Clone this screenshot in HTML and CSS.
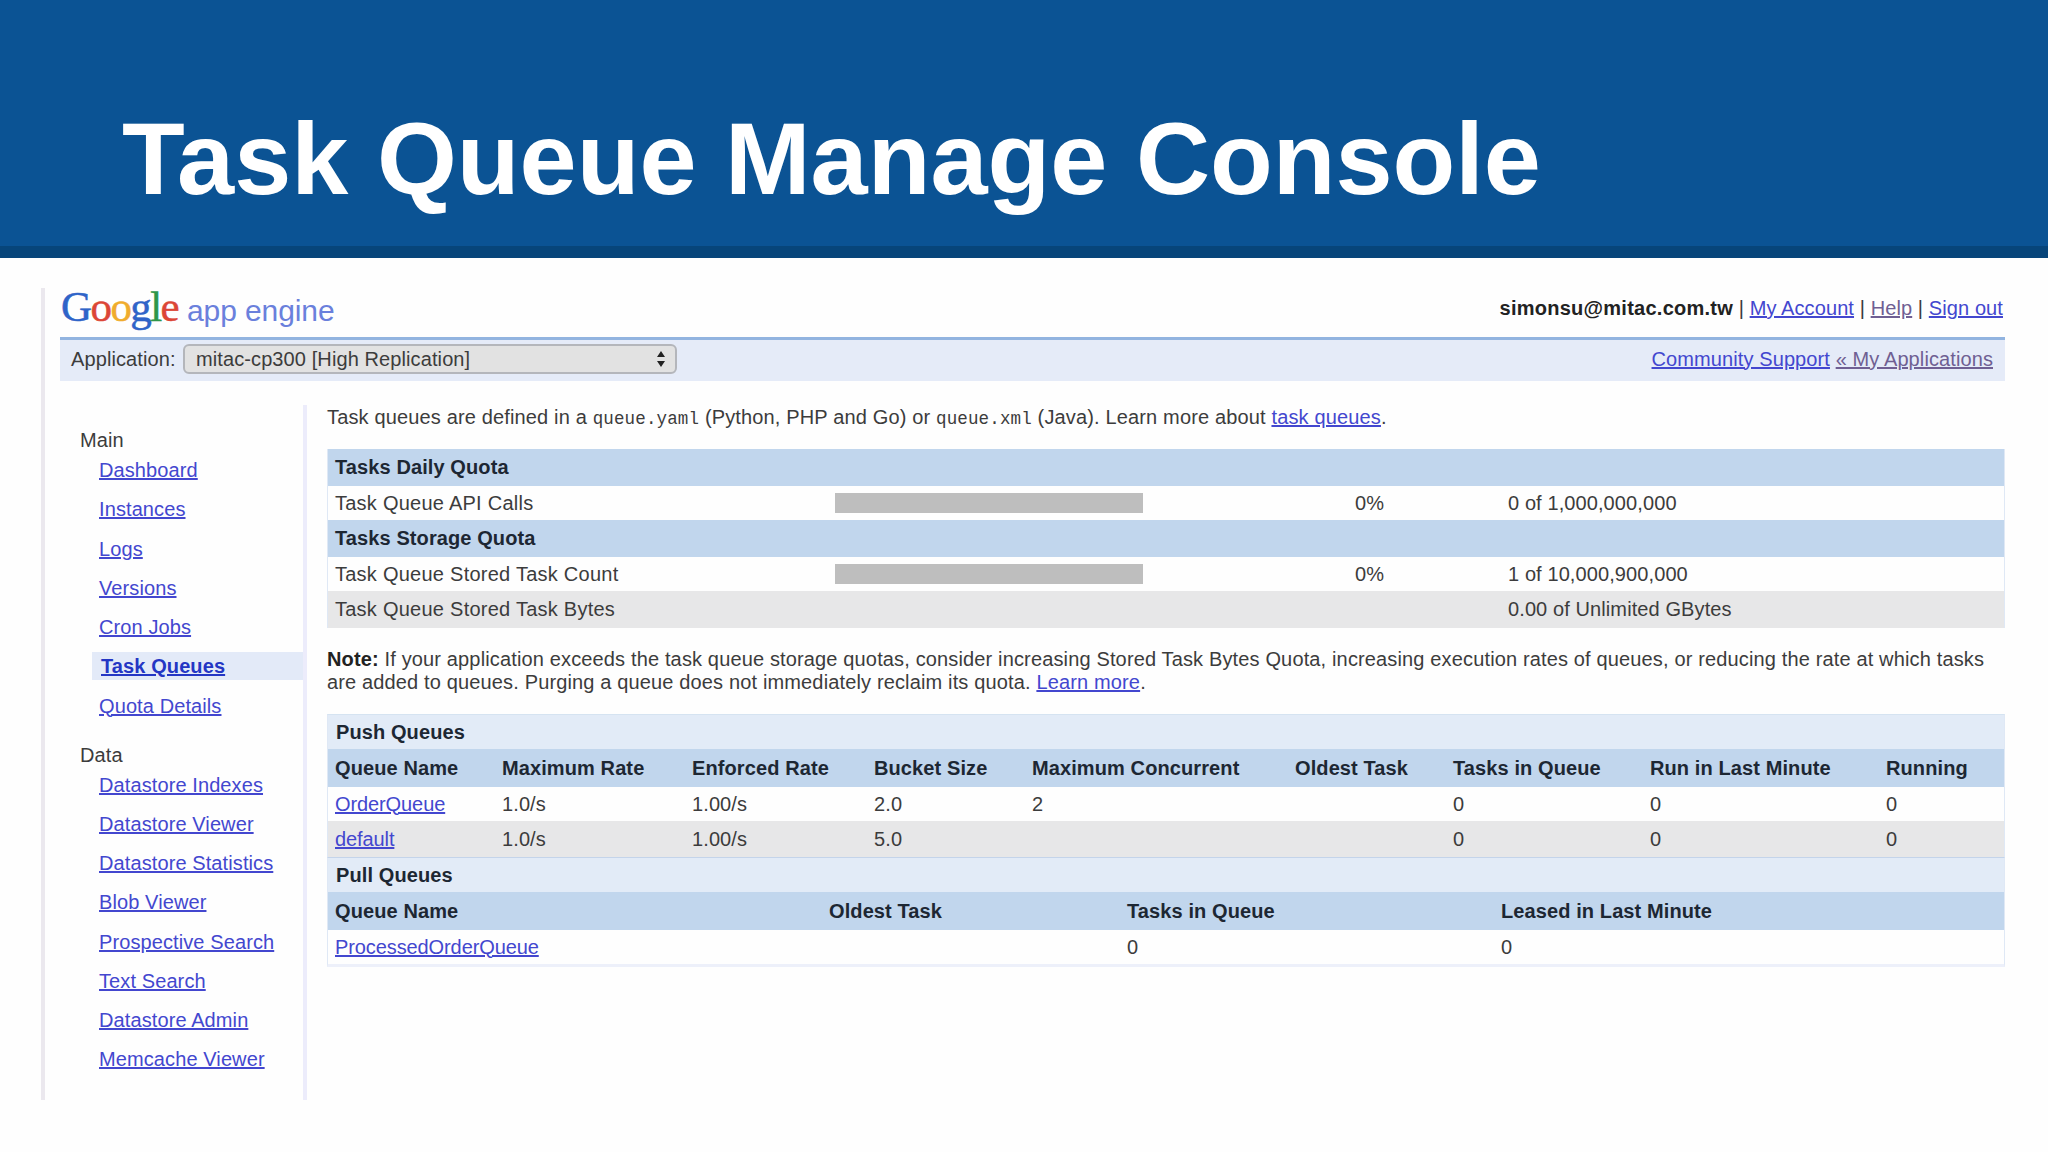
FILE: index.html
```html
<!DOCTYPE html>
<html lang="en">
  <head>
    <meta charset="UTF-8" />
    <meta name="viewport" content="width=device-width, initial-scale=1.0" />
    <title>Task Queue Manage Console</title>
    <link rel="stylesheet" href="styles.css">
  </head>
  <body>
    <header class="slide-header">
      <h1>Task Queue Manage Console</h1>
    </header>
    <div class="console">
      <div class="top">
        <div class="logo">
          <span class="google"><span class="blue">G</span><span class="red">o</span><span class="yellow">o</span><span class="blue">g</span><span class="green">l</span><span class="red">e</span></span>
          <span class="product">app engine</span>
        </div>
        <div class="account">
          <b>simonsu@mitac.com.tw</b> | <a href="#">My Account</a> | <a href="#" class="visited">Help</a> | <a href="#">Sign out</a>
        </div>
      </div>
      <div class="app-bar">
        <span class="app-label">Application:</span>
        <div class="select">
          <span>mitac-cp300 [High Replication]</span>
          <svg class="arrows" width="10" height="18" viewBox="0 0 10 18">
            <path d="M5 1 L9 7 H1 Z M5 17 L9 11 H1 Z" fill="#222" />
          </svg>
        </div>
        <div class="app-links">
          <a href="#">Community Support</a>
          <a href="#" class="visited">« My Applications</a>
        </div>
      </div>
      <div class="columns">
        <nav class="sidebar">
          <h2>Main</h2>
          <ul>
            <li><a href="#">Dashboard</a></li>
            <li><a href="#">Instances</a></li>
            <li><a href="#">Logs</a></li>
            <li><a href="#">Versions</a></li>
            <li><a href="#">Cron Jobs</a></li>
            <li class="active"><a href="#">Task Queues</a></li>
            <li><a href="#">Quota Details</a></li>
          </ul>
          <h2>Data</h2>
          <ul>
            <li><a href="#">Datastore Indexes</a></li>
            <li><a href="#">Datastore Viewer</a></li>
            <li><a href="#">Datastore Statistics</a></li>
            <li><a href="#">Blob Viewer</a></li>
            <li><a href="#">Prospective Search</a></li>
            <li><a href="#">Text Search</a></li>
            <li><a href="#">Datastore Admin</a></li>
            <li><a href="#">Memcache Viewer</a></li>
          </ul>
        </nav>
        <main class="content">
          <p class="intro">Task queues are defined in a <code>queue.yaml</code> (Python, PHP and Go) or <code>queue.xml</code> (Java). Learn more about <a href="#">task queues</a>.</p>

          <table class="quota">
            <colgroup>
              <col class="q-name" /><col class="q-bar" /><col class="q-percent" /><col />
            </colgroup>
            <tr class="head"><th colspan="4">Tasks Daily Quota</th></tr>
            <tr>
              <td>Task Queue API Calls</td>
              <td><div class="bar"></div></td>
              <td>0%</td>
              <td>0 of 1,000,000,000</td>
            </tr>
            <tr class="head"><th colspan="4">Tasks Storage Quota</th></tr>
            <tr>
              <td>Task Queue Stored Task Count</td>
              <td><div class="bar"></div></td>
              <td>0%</td>
              <td>1 of 10,000,900,000</td>
            </tr>
            <tr class="alt">
              <td>Task Queue Stored Task Bytes</td>
              <td></td>
              <td></td>
              <td>0.00 of Unlimited GBytes</td>
            </tr>
          </table>

          <p class="note"><b>Note:</b> If your application exceeds the task queue storage quotas, consider increasing Stored Task Bytes Quota, increasing execution rates of queues, or reducing the rate at which tasks<br />are added to queues. Purging a queue does not immediately reclaim its quota. <a href="#">Learn more</a>.</p>

          <table class="push">
            <colgroup>
              <col class="p-name" /><col class="p-max" /><col class="p-enforced" /><col class="p-bucket" /><col class="p-concurrent" /><col class="p-oldest" /><col class="p-tasks" /><col class="p-run" /><col />
            </colgroup>
            <tr class="section"><th colspan="9">Push Queues</th></tr>
            <tr class="head">
              <th>Queue Name</th>
              <th>Maximum Rate</th>
              <th>Enforced Rate</th>
              <th>Bucket Size</th>
              <th>Maximum Concurrent</th>
              <th>Oldest Task</th>
              <th>Tasks in Queue</th>
              <th>Run in Last Minute</th>
              <th>Running</th>
            </tr>
            <tr>
              <td><a href="#">OrderQueue</a></td>
              <td>1.0/s</td>
              <td>1.00/s</td>
              <td>2.0</td>
              <td>2</td>
              <td></td>
              <td>0</td>
              <td>0</td>
              <td>0</td>
            </tr>
            <tr class="alt">
              <td><a href="#">default</a></td>
              <td>1.0/s</td>
              <td>1.00/s</td>
              <td>5.0</td>
              <td></td>
              <td></td>
              <td>0</td>
              <td>0</td>
              <td>0</td>
            </tr>
          </table>
          <table class="pull">
            <colgroup>
              <col class="l-name" /><col class="l-oldest" /><col class="l-tasks" /><col />
            </colgroup>
            <tr class="section"><th colspan="4">Pull Queues</th></tr>
            <tr class="head">
              <th>Queue Name</th>
              <th>Oldest Task</th>
              <th>Tasks in Queue</th>
              <th>Leased in Last Minute</th>
            </tr>
            <tr>
              <td><a href="#">ProcessedOrderQueue</a></td>
              <td></td>
              <td>0</td>
              <td>0</td>
            </tr>
          </table>
        </main>
      </div>
    </div>
  </body>
</html>
```
FILE: styles.css
```css
* {
  box-sizing: border-box;
}
body {
  margin: 0;
  height: 1152px;
  overflow: hidden;
  background-color: #fefefe;
  color: #3c3c3c;
  font-family: "Liberation Sans", Arial, sans-serif;
  font-size: 20px;
  line-height: 23px;
  letter-spacing: 0.1px;
}
a {
  color: #4347cf;
}
a.visited {
  color: #6f5f93;
}
b {
  color: #222;
}

/* slide title */
.slide-header {
  height: 258px;
  background-color: #0b5394;
  border-bottom: 12px solid #07457a;
  padding: 97px 0 0 122px;
}
h1 {
  margin: 0;
  color: white;
  font-size: 102.7px;
  line-height: 123px;
  letter-spacing: 0;
  white-space: nowrap;
}

/* console */
.console {
  width: 1964px;
  height: 812px;
  margin: 30px 0 0 41px;
  padding-left: 15px;
  border-left: 4px solid #ebe8ee;
}
.top {
  display: flex;
  justify-content: space-between;
  height: 49px;
}
.logo {
  display: flex;
  align-items: baseline;
  padding-left: 1px;
  line-height: 37px;
}
.google {
  width: 126px;
  font-family: "Liberation Serif", "Times New Roman", serif;
  font-size: 43px;
  letter-spacing: -1.6px;
  -webkit-text-stroke: 0.5px;
}
.product {
  color: #6a80dc;
  font-size: 30px;
  letter-spacing: -0.1px;
}
.blue {
  color: #2f64c8;
}
.red {
  color: #dc4636;
}
.yellow {
  color: #f0ac2c;
}
.green {
  color: #2e9648;
}
.account {
  padding: 9px 2px 0 0;
}
.account b {
  letter-spacing: 0.25px;
}
.app-bar {
  display: flex;
  align-items: center;
  height: 44px;
  padding: 0 12px 3px 11px;
  border-top: 3px solid #92b4e0;
  background-color: #e5ebf8;
}
.app-label {
  width: 112px;
}
.select {
  display: flex;
  justify-content: space-between;
  align-items: center;
  width: 494px;
  height: 30px;
  padding: 0 9px 0 11px;
  border: 2px solid #b4b6bb;
  border-radius: 6px;
  background-color: #e2e2e2;
}
.arrows {
  display: block;
}
.app-links {
  margin-left: auto;
}
.columns {
  display: flex;
  padding-top: 24px;
}

/* sidebar */
.sidebar {
  width: 247px;
  height: 695px;
  padding: 21px 0 0 20px;
  border-right: 4px solid #ececfb;
}
.sidebar h2 {
  margin: 0;
  height: 30px;
  font-size: 20px;
  font-weight: normal;
  line-height: 28px;
}
.sidebar ul {
  display: flex;
  flex-direction: column;
  gap: 11.25px;
  margin: 0 0 21px;
  padding: 0 0 0 12px;
  list-style: none;
}
.sidebar li {
  height: 28px;
  padding-left: 7px;
  line-height: 28px;
}
.sidebar .active {
  padding-left: 9px;
  background-color: #e3eaf8;
}
.active a {
  color: #2436c4;
  font-weight: bold;
}

/* content */
.content {
  width: 1678px;
  margin-left: 20px;
}
.intro {
  margin: 1px 0 18px;
  letter-spacing: 0.15px;
  white-space: nowrap;
}
code {
  font-family: "Liberation Mono", "Courier New", monospace;
  font-size: 17.5px;
}
.note {
  margin: 20px 0 20px;
  letter-spacing: 0.145px;
  white-space: nowrap;
}
table {
  width: 1678px;
  table-layout: fixed;
  border-spacing: 0;
  border: solid #dfe8f5;
  border-width: 0 1px;
}
tr {
  height: 34px;
}
th,
td {
  padding: 0 0 0 7px;
  text-align: left;
  white-space: nowrap;
}
th {
  color: #1d2733;
}
td a {
  letter-spacing: -0.1px;
}
.head {
  height: 38px;
  background-color: #c1d6ed;
}
.quota .head {
  height: 37px;
}
.quota td:first-child {
  letter-spacing: 0.25px;
}
.section {
  background-color: #e2ebf7;
}
.section th {
  padding-left: 8px;
}
.alt {
  height: 36px;
  background-color: #e7e7e8;
}
.quota .alt {
  height: 37px;
}
.push {
  border-top: 1px solid #d5e3f1;
  border-bottom: 1px solid #c4d4ea;
}
.pull {
  border-bottom: 3px solid #edf0fa;
}
.bar {
  width: 308px;
  height: 20px;
  background-color: #bebebe;
}
.q-name {
  width: 500px;
}
.q-bar {
  width: 520px;
}
.q-percent {
  width: 153px;
}
.p-name {
  width: 167px;
}
.p-max {
  width: 190px;
}
.p-enforced {
  width: 182px;
}
.p-bucket {
  width: 158px;
}
.p-concurrent {
  width: 263px;
}
.p-oldest {
  width: 158px;
}
.p-tasks {
  width: 197px;
}
.p-run {
  width: 236px;
}
.l-name {
  width: 494px;
}
.l-oldest {
  width: 298px;
}
.l-tasks {
  width: 374px;
}
```
